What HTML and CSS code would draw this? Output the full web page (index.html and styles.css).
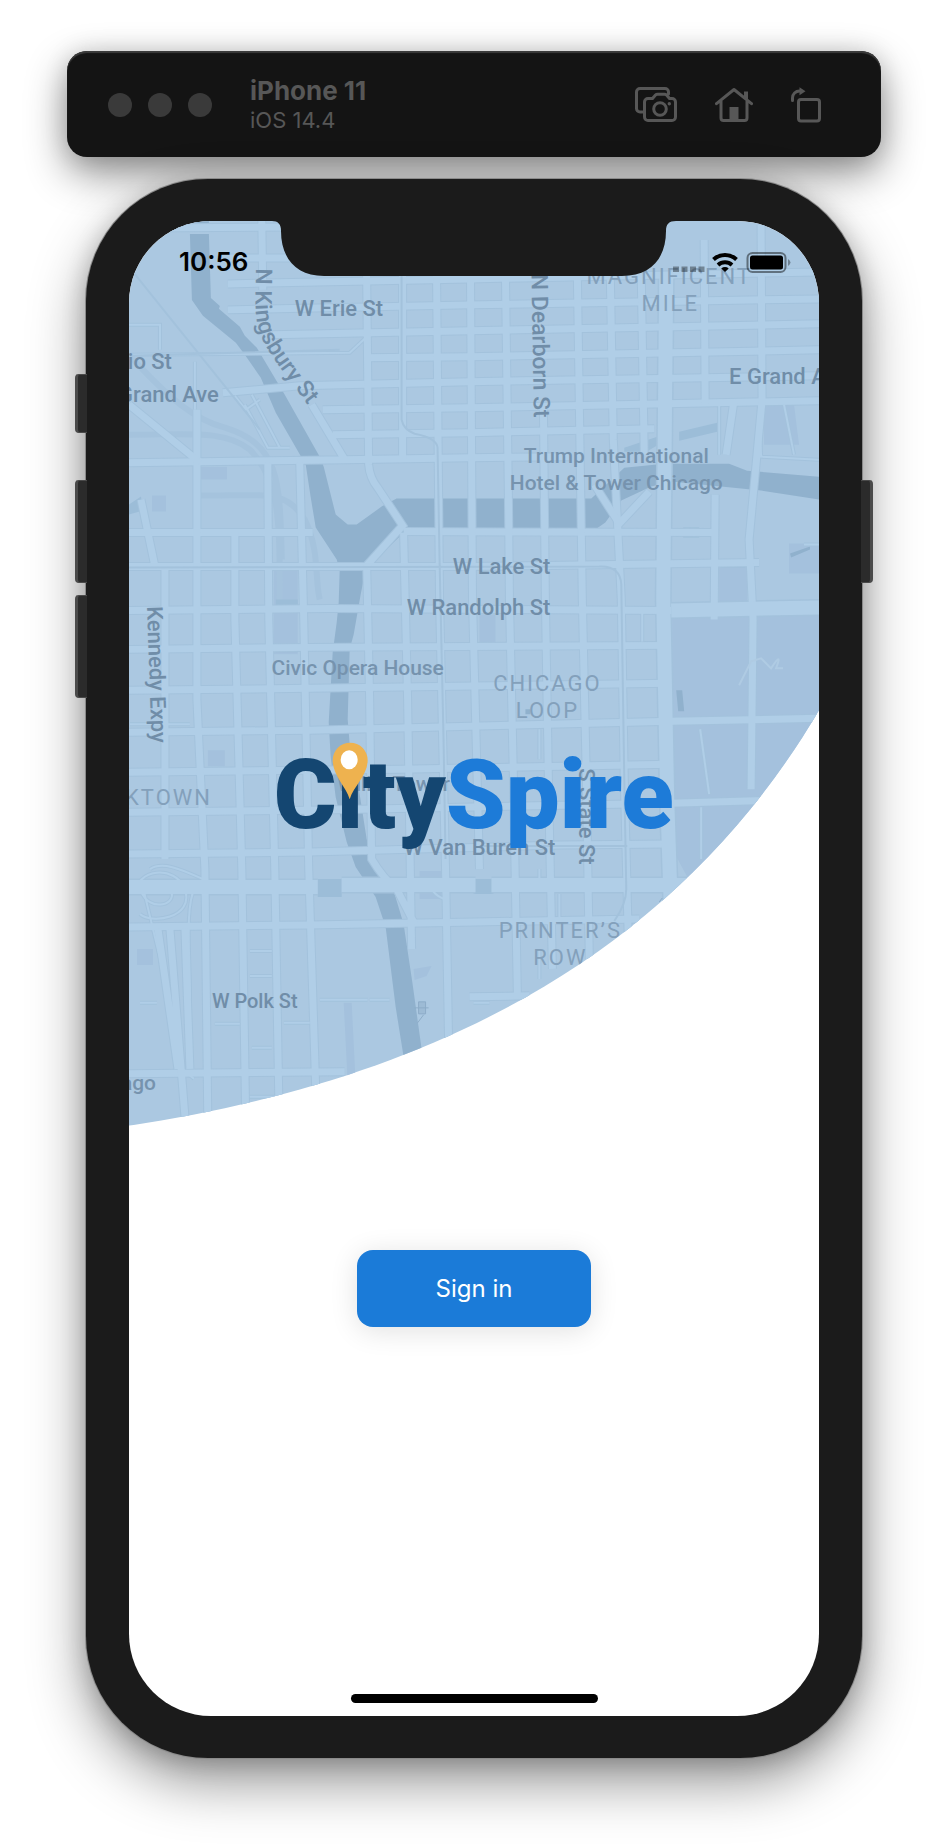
FILE: index.html
```html
<!DOCTYPE html>
<html lang="en">
<head>
<meta charset="utf-8">
<meta name="viewport" content="width=device-width, initial-scale=1">
<title>CitySpire</title>
<link rel="stylesheet" href="styles.css">
</head>
<body>
<div class="stage">
  <header class="toolbar">
    <div class="lights"><span class="light"></span><span class="light"></span><span class="light"></span></div>
    <div class="device">
      <div class="device-name">iPhone 11</div>
      <div class="device-os">iOS 14.4</div>
    </div>
    <div class="tools">
      <button class="tool" type="button" aria-label="Screenshot">
        <svg width="42" height="36" viewBox="636 86 42 36"><path d="M643.5 111H641a3.500 3.500 0 0 1-3.500-3.500V91a3.500 3.500 0 0 1 3.500-3.500h25a3.500 3.500 0 0 1 3.500 3.500v2"/><path d="M649 97.500h4.500l3-3.500q.7-.7 2-.7h7q1.300 0 2 .7l3 3.500h2.500a3.500 3.500 0 0 1 3.500 3.500v15a3.500 3.500 0 0 1-3.500 3.500h-24a3.500 3.500 0 0 1-3.500-3.500v-15a3.500 3.500 0 0 1 3.500-3.500z"/><circle cx="661" cy="108" r="6.300"/><circle class="solid" cx="670.300" cy="102.700" r="1.700"/></svg>
      </button>
      <button class="tool" type="button" aria-label="Home">
        <svg width="38" height="36" viewBox="716 86 38 36"><path d="M717.500 102.700 735 88.500l17.500 14.200M722 100v17a2.500 2.500 0 0 0 2.500 2.500h21a2.500 2.500 0 0 0 2.500-2.500v-17"/><path class="solid" d="M730.500 106h9v14h-9zM745 90.500h4v9l-4-3z"/></svg>
      </button>
      <button class="tool" type="button" aria-label="Rotate">
        <svg width="30" height="36" viewBox="791 85 30 36"><rect x="798.500" y="97.500" width="21" height="21.500" rx="2.500"/><path d="M792.500 98.500v-2.500a7 7 0 0 1 7-7h2"/><path class="solid" d="M799.500 85.200v8l6-4z"/></svg>
      </button>
    </div>
  </header>

  <main class="phone">
    <span class="side-key key-mute"></span>
    <span class="side-key key-up"></span>
    <span class="side-key key-down"></span>
    <span class="side-key key-power"></span>

    <div class="screen">
      <svg class="map" viewBox="129 221 691 920" role="img" aria-label="CitySpire, map of Chicago">
        <defs>
          <clipPath id="sweep"><path d="M129 221H820V711C670.500 965 418.500 1083.600 129 1127z"/></clipPath>
          <path id="kingsbury" d="M256 268C256 296 253 318 262 338C271 358 293 385 324 426"/>
          <g id="wide">
            <path d="M129 888H318M342 886H476M492 886H700M667 276L664 600 668 800 672 920"/>
            <path d="M672 611L820 608"/>
          </g>
          <g id="main">
            <path d="M129 228L290 227M230 258L300 258M228 284L470 279 820 272M228 310L470 305 820 299M273 335L470 331 820 324M365 358L470 357 820 350M223 393L300 386 470 382 820 376M323 410L470 408 820 401M333 435L470 433 655 429M345 460L470 458 570 457M129 463L345 460"/>
            <path d="M129 533L313 533M404 532L715 533M129 567L470 567 760 563M129 611L330 609 672 611M129 650L310 648 670 646M129 691L310 689 670 684M129 733L310 731 672 722 820 719M129 773L400 770 670 765M129 813L310 811 672 804 780 801M129 855L310 853 560 846 670 845M129 928L310 926 476 923 640 920M129 1075L345 1073M470 998L530 997"/>
            <path d="M197 410L197 700 205 870 208 1130M235 533L235 620 242 870 246 1130M268 463L269 620 275 870 279 1100M300 463L304 620 309 870 316 1090M262 221L263 290"/>
            <path d="M367 276L369 465Q370 478 378 488L403 526 367 566 370 700 372 860Q384 880 397 890L415 925M403 276L403 460M404 533L408 700 412 950M437 276L440 600 446 870 449 1040M471 276L473 600 480 870M506 276L509 500 510 600 514 780 518 1000M544 408L546 600 549 780 553 970M578 276L583 600 587 780 590 960M611 276L614 440 622 600 625 780 629 940M642 276L645 455M705 240L706 405M762 225L763 400 750 540 754 620 752 790M716 495L715 620"/>
            <path d="M129 405L172 440 200 463M312 405L345 460M595 485L620 524 650 492M735 400L727 455"/>
            <path d="M165 567V860M141 500L155 567M170 930L186 1130M185 930L190 1070M158 930L178 1070"/>
          </g>
          <g id="small">
            <path d="M129 355L350 353 365 339M129 325H160V350M195 362V410M245 405L268 448H290M252 395L280 448M235 396 246 410 260 400"/>
            <path d="M760 405L762 457 820 460M785 405L795 455M720 400V455M805 545H820"/>
            <path d="M190 725H130M390 1001H370M320 1001H368M250 952H272M250 977H272M215 1025H240M284 1024H310M252 1049H272M250 1098H275M140 1004H157M474 1004H490"/>
            <path d="M540 730V760M643 612V642M701 730L710 795M702 808V860M445 900Q430 895 430 880M540 870V885M560 895V925M540 950V980"/>
            <path d="M136 895C135 870 175 865 185 890 195 920 150 925 140 915M141 892C150 915 180 905 170 890M195 888C185 910 190 950 190 1000M150 870C165 860 190 875 215 885M141 880L165 980 182 1070 194 1080"/>
          </g>
        </defs>
        <g clip-path="url(#sweep)">
          <rect class="land" x="129" y="221" width="691" height="920"/>
          <path class="park" d="M673 616H820V860L700 900 673 850zM790 544h30v30h-30zM420 872h22v28h-22zM765 405h30l5 40h-35zM201 467h26v13h-26zM208 751h17v16h-17zM137 950h16v16h-16zM414 970l18-3-5 10-12 4zM344 1004h8l4 80h-8zM152 496h14v16h-14zM720 563h28v40h-28zM274 565h24v90h-24zM480 615h16v28h-16z"/>
          <path class="rail" d="M129 435C190 435 225 430 250 450C280 480 280 520 280 600M129 355C170 400 195 420 225 428C280 445 280 480 282 560M200 496C270 496 285 490 305 520 320 550 315 580 320 600"/>
          <path class="water" d="M190 221h19v2h-19zM190 234h19l2 64 9 8-1 3 21 18 5 9 12 12 28 47 35 62 4 10 12 48 12 10h9l25-18 15-8H592l33-31 40-4h65l18 7 72 6v23l-58-9-90-9-20 5-30 14-16 22-10 7-21 4H407l-7 3-34 33-5 25-7 40-4 15-1 35-1 35 2 25 10 50 7 45 8 25 20 30 9 30 9 60 9 65-18 8-8-50-10-80-10-30-20-30-9-25-11-45-5-40-2-35 2-35 2-35 4-30 2-20 1-32-3-11-21-32-5-30-5-33-30-52-15-35-16-23-9-12-33-27-11-16z"/>
          <path class="canal" d="M129 505l12-8 2 14-14 4zM625 448l36-12v8l-14 8h-22zM680 432l38-9v9l-38 9zM318 880h24v18h-24zM474 880h20v15h-20zM722 561h24v7h-24zM684 528h16v10h-16zM276 600h22v10h-22zM276 645h22v8h-22zM136 500h6v12h-6z"/>
          <path class="water" d="M677 691h6l2 21h-6zM526 710h5v5h-5zM791 554l20-7v3l-19 8z"/>
          <g class="case"><use href="#wide" class="w-wide"/><use href="#main" class="w-main"/><use href="#small" class="w-small"/></g>
          <g class="fill"><use href="#small" class="w-small"/><use href="#main" class="w-main"/><use href="#wide" class="w-wide"/></g>
          <path class="tram" d="M402 276V420Q404 430 415 434 437 438 438 448L440 560 444 740 446 860M129 568L600 567Q621 566 622 585L625 780 627 890Q627 905 615 922M129 356L340 350M133 272L260 430M480 847H628"/>
          <path class="doodle" d="M740 686l12-24 10-3 10 10q12-18 5 0l7 0"/>
          <path class="mark" d="M419 1003h7v12h-7zM415 1009h14M418 1024l6-8M660 903l3-4"/>

          <g class="road-label">
            <text x="295" y="316">W Erie St</text>
            <text class="end" x="172" y="369">Ohio St</text>
            <text class="end" x="219" y="402">Grand Ave</text>
            <text class="down"><textPath href="#kingsbury">N Kingsbury St</textPath></text>
            <text class="down" transform="translate(532 274) rotate(89)">N Dearborn St</text>
            <text x="730" y="384">E Grand Ave</text>
            <text class="end" x="551" y="575">W Lake St</text>
            <text class="end" x="551" y="616">W Randolph St</text>
            <text transform="translate(147 607) rotate(88)">Kennedy Expy</text>
            <text class="end" x="556" y="856">W Van Buren St</text>
            <text transform="translate(580 769) rotate(90)">S State St</text>
            <text class="minor" x="212" y="1009">W Polk St</text>
          </g>
          <g class="place-label">
            <text x="617" y="463">Trump International</text>
            <text x="617" y="490">Hotel &amp; Tower Chicago</text>
            <text x="358" y="676">Civic Opera House</text>
            <text x="394" y="792">Willis Tower</text>
            <text class="end" x="156" y="1091">Chicago</text>
          </g>
          <g class="area-label">
            <text x="670" y="284">MAGNIFICENT</text>
            <text x="671" y="311">MILE</text>
            <text x="548" y="692">CHICAGO</text>
            <text x="548" y="719">LOOP</text>
            <text class="end" x="212" y="806">GREEKTOWN</text>
            <text x="561" y="939">PRINTER’S</text>
            <text x="561" y="966">ROW</text>
          </g>
        </g>
        <text class="logo" x="274" y="829"><tspan class="logo-city">City</tspan><tspan class="logo-spire">Spire</tspan></text>
        <path class="pin" d="M350 800C346 787 333 776 333 761a17.500 17.500 0 0 1 35 0C368 776 354 787 350 800z"/>
        <ellipse class="pin-hole" cx="349.500" cy="760.500" rx="8.500" ry="9.500"/>
      </svg>

      <div class="status">
        <time class="clock">10:56</time>
        <svg width="120" height="24" viewBox="672 250 120 24" aria-label="Wi-Fi and battery">
          <path class="dots" d="M674 266.500h6v5.500h-6zM682.500 266.500h6v5.500h-6zM691 266.500h6v5.500h-6zM699.500 266.500h6v5.500h-6z"/>
          <path class="wifi" d="M714.500 259.500a17 17 0 0 1 23 0M719 265a10.500 10.500 0 0 1 14 0"/>
          <path d="M722.300 268.500a5.500 5.500 0 0 1 7.400 0L726 272z"/>
          <rect class="cell" x="748.500" y="253" width="38" height="19" rx="5"/>
          <rect x="751" y="255.500" width="33" height="14" rx="2.500"/>
          <path class="dots" d="M789 259q5 3.500 0 7z"/>
        </svg>
      </div>
      <svg class="notch" width="404" height="55" viewBox="273 221 404 55" aria-hidden="true"><path d="M273 221C279 221 282 224 282 231C282 258 297 276 325 276H623C652 276 667 258 667 231C667 224 670 221 677 221z"/></svg>

      <button class="sign-in" type="button">Sign in</button>
      <div class="home-bar"></div>
    </div>
  </main>
</div>
</body>
</html>
```
FILE: styles.css
```css
* { box-sizing: border-box; }

body {
  margin: 0;
  background: #fff;
  font-family: Inter, "Liberation Sans", sans-serif;
}

.stage {
  max-width: 948px;
  margin: 0 auto;
  padding: 51px 67px 87px;
}

.toolbar {
  display: flex;
  align-items: center;
  height: 106px;
  padding: 2px 60px 0 41px;
  border-radius: 20px;
  background: #141414;
  box-shadow: inset 0 2px 1px #3c3c3c, 0 16px 40px rgba(0, 0, 0, .45), 0 0 24px rgba(0, 0, 0, .12);
}

.lights { display: flex; gap: 16px; }
.light { width: 24px; height: 24px; border-radius: 50%; background: #3a3a3a; }

.device { margin-left: 38px; color: #575757; }
.device-name { font-size: 26px; line-height: 30px; font-weight: 700; }
.device-os { font-size: 22px; line-height: 28px; }

.tools { display: flex; gap: 38px; margin-left: auto; }
.tool { display: block; padding: 0; border: 0; background: none; }
.tool svg { display: block; fill: none; stroke: #575757; stroke-width: 3; stroke-linecap: round; stroke-linejoin: round; }
.tool .solid { fill: #575757; stroke: none; }

.phone {
  position: relative;
  margin: 22px 19px 0;
  padding: 42px 43px;
  border-radius: 122px;
  background: #1b1b1b;
  box-shadow: 0 0 0 1px #8a8a8a, 0 24px 56px rgba(0, 0, 0, .42), 0 4px 24px rgba(0, 0, 0, .2);
}

.side-key {
  position: absolute;
  left: -11px;
  width: 12px;
  height: 103px;
  border: 2px solid #4a4a4a;
  border-width: 1px 0 1px 3px;
  border-radius: 4px 0 0 4px;
  background: #2b2b2b;
}
.key-mute { top: 195px; height: 59px; }
.key-up { top: 301px; }
.key-down { top: 416px; }
.key-power {
  top: 301px;
  left: auto;
  right: -11px;
  border-width: 1px 3px 1px 0;
  border-radius: 0 4px 4px 0;
}

.screen {
  position: relative;
  display: flex;
  flex-direction: column;
  align-items: center;
  padding-bottom: 13px;
  border-radius: 82px;
  overflow: hidden;
  background: #fff;
}

.map { display: block; width: 100%; height: auto; font-family: Roboto, "Liberation Sans", sans-serif; }
.land { fill: #abc8e1; }
.park { fill: #a4c1dd; }
.water { fill: #90b1cd; }
.canal { fill: #9cbdd8; }
.rail { fill: none; stroke: #a5c3dd; stroke-width: 6; }
.tram { fill: none; stroke: #a3c2dc; stroke-width: 2; }
.doodle { fill: none; stroke: #afcbe3; stroke-width: 2; }
.mark { fill: #9dbbd5; stroke: #8dacc8; stroke-width: 1; }
.case { fill: none; stroke: #a3c2dc; }
.case .w-wide { stroke-width: 17px; }
.case .w-main { stroke-width: 9px; }
.case .w-small { stroke-width: 4px; }
.fill { fill: none; stroke: #b0cee7; }
.fill .w-wide { stroke-width: 14px; }
.fill .w-main { stroke-width: 7px; }
.fill .w-small { stroke-width: 2px; }

.road-label { fill: #708da8; font-size: 22px; font-weight: 500; }
.road-label .down { font-size: 23px; }
.road-label .minor { font-size: 20px; }
.place-label { fill: #7693ae; font-size: 21px; font-weight: 500; text-anchor: middle; }
.area-label { fill: #83a0bb; font-size: 22px; letter-spacing: 2px; text-anchor: middle; }
.map .end { text-anchor: end; }

.logo { font-size: 96px; font-weight: 900; }
.logo-city { fill: #144671; }
.logo-spire { fill: #1d7bd8; }
.pin { fill: #eeb24f; }
.pin-hole { fill: #fff; }

.status {
  position: absolute;
  top: 25px;
  left: 0;
  right: 0;
  display: flex;
  align-items: center;
  justify-content: space-between;
  padding: 0 28px 0 50px;
}
.clock { font-size: 26px; line-height: 32px; font-weight: 600; color: #000; }
.dots { fill: #000; opacity: .35; }
.wifi { fill: none; stroke: #000; stroke-width: 4; }
.cell { fill: none; stroke: #000; stroke-width: 2; stroke-opacity: .45; }

.notch { position: absolute; top: 0; left: 50%; margin-left: -202px; fill: #1b1b1b; }

.sign-in {
  width: 234px;
  height: 77px;
  margin-top: 110px;
  border: 0;
  border-radius: 16px;
  background: #1b7bd8;
  color: #fff;
  font-family: inherit;
  font-size: 24px;
  box-shadow: 0 4px 28px rgba(0, 0, 0, .12);
}

.home-bar {
  width: 247px;
  height: 9px;
  margin-top: 367px;
  border-radius: 5px;
  background: #000;
}
```
